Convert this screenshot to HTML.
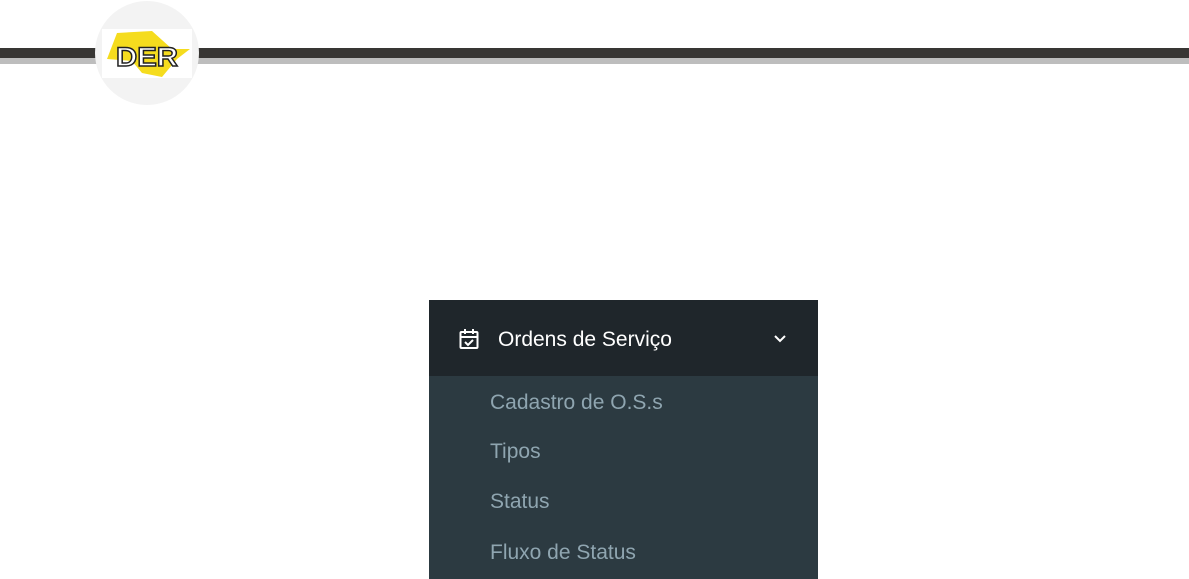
<!DOCTYPE html>
<html><head><style>
body{margin:0;width:1189px;height:579px;background:#fff;position:relative;overflow:hidden;font-family:"Liberation Sans",sans-serif}
.bar{position:absolute;left:0;width:1189px}
.menu{position:absolute;left:429px;top:300px;width:389px;height:279px;background:#2c3a41}
.hd{height:76px;background:#1f262b;position:relative;color:#fff;font-size:21px}
.it{position:absolute;left:61px;color:#8fa5b0;font-size:21px}
</style></head><body>
<div class="bar" style="top:48px;height:10px;background:#383634"></div>
<div class="bar" style="top:58px;height:6px;background:#bdbdbd"></div>
<div style="position:absolute;left:95px;top:1px;width:104px;height:104px;border-radius:50%;background:#f3f3f3"></div>
<div style="position:absolute;left:102px;top:29px;width:90px;height:49px;background:#fff"></div>
<svg style="position:absolute;left:102px;top:29px" width="90" height="49">
<polygon points="15,4 50,2 70,20 88,20 75,30 60,48 40,44 30,32 5,30" fill="#f5dc1e"/>
<text x="14" y="37" font-family="Liberation Sans" font-weight="bold" font-size="27" fill="#fff" stroke="#222" stroke-width="1.4" textLength="62" lengthAdjust="spacingAndGlyphs">DER</text>
</svg>
<div class="menu">
<div class="hd">
<svg style="position:absolute;left:30px;top:29px" width="20" height="20" viewBox="0 0 20 20" fill="none" stroke="#fff" stroke-width="2"><rect x="1.5" y="3" width="17" height="16" rx="1"/><line x1="1.5" y1="8" x2="18.5" y2="8"/><line x1="6" y1="0" x2="6" y2="5"/><line x1="14" y1="0" x2="14" y2="5"/><polyline points="6,13 9,16 14,11"/></svg>
<span style="position:absolute;left:69px;top:28px">Ordens de Serviço</span>
<svg style="position:absolute;left:345px;top:35px" width="12" height="8" viewBox="0 0 12 8" fill="none" stroke="#fff" stroke-width="2"><polyline points="1,1 6,6 11,1"/></svg>
</div>
<div class="it" style="top:91px">Cadastro de O.S.s</div>
<div class="it" style="top:140px">Tipos</div>
<div class="it" style="top:190px">Status</div>
<div class="it" style="top:241px">Fluxo de Status</div>
</div>
</body></html>
